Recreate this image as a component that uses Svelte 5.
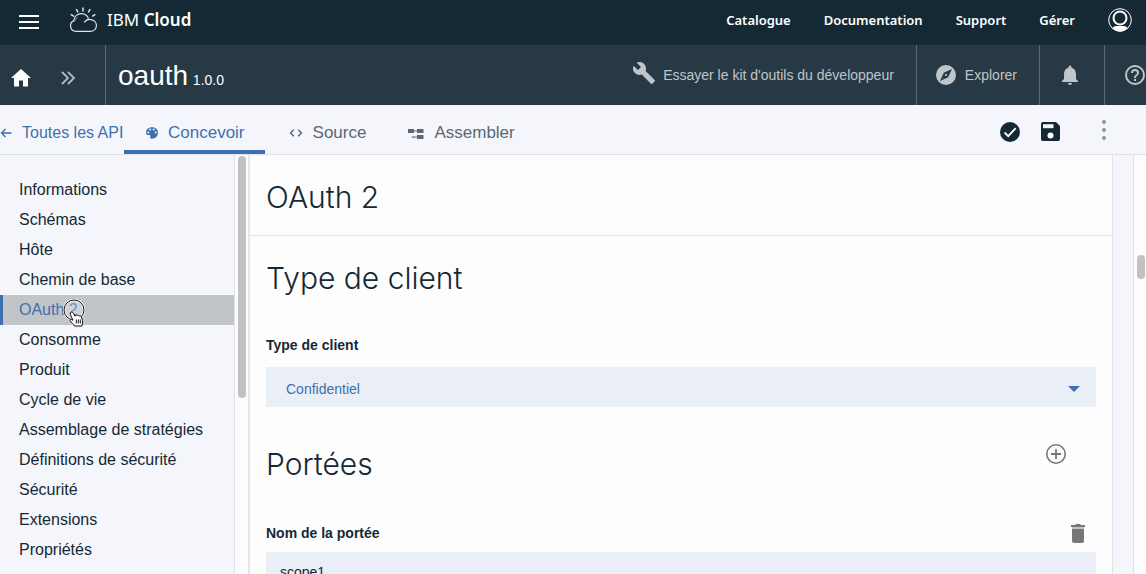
<script>
  const links = ['Catalogue', 'Documentation', 'Support', 'Gérer'];
  const sections = [
    'Informations',
    'Schémas',
    'Hôte',
    'Chemin de base',
    'OAuth 2',
    'Consomme',
    'Produit',
    'Cycle de vie',
    'Assemblage de stratégies',
    'Définitions de sécurité',
    'Sécurité',
    'Extensions',
    'Propriétés'
  ];
  let active = $state('OAuth 2');
  let clientType = $state('Confidentiel');
  let scopeName = $state('scope1');
</script>

<div class="app">
  <header class="top">
    <button class="icon menu" aria-label="Menu">
      <svg width="20" height="16" viewBox="0 0 20 16" stroke="#fff" stroke-width="2"><path d="M0 2h20M0 8h20M0 14h20" /></svg>
    </button>
    <a class="brand" href="#home">
      <svg width="28" height="26" viewBox="0 0 28 26" fill="none" stroke="#dfe4e7" stroke-width="1.2">
        <path d="M7 24.3h14.5a5.8 5.8 0 0 0 1.6-11.4 6.4 6.4 0 0 0-7.8 2.600" />
        <path d="M7 24.3a5.600 5.600 0 0 1-2.200-10.700C5 9 8.700 6.500 12.700 6.700c3 .1 5.500 1.600 6.800 4.900" />
        <path d="M5.500 14.500c.2-1.800 1.400-3.300 3-4" opacity=".5" />
        <path d="M14 0.500v4M7.300 2.200l1.800 3.200M21.200 2.200l-1.900 3.200M1.800 7.300l3.200 2M26.400 7.300l-3.200 2" stroke-width="1.500" />
      </svg>
      <span>IBM <b>Cloud</b></span>
    </a>
    <nav class="links">
      {#each links as link}
        <a href="#{link}">{link}</a>
      {/each}
    </nav>
    <button class="icon user" aria-label="Profil">
      <svg width="24" height="24" viewBox="0 0 24 24">
        <circle cx="12" cy="12" r="11.300" fill="none" stroke="#fff" />
        <path d="M4.500 20q1.200-2 4-2h7q2.800 0 4 2Q16.500 23.500 12 23.500T4.500 20Z" fill="#fff" />
        <circle cx="12" cy="10" r="6.500" fill="#152934" stroke="#fff" stroke-width="2" />
      </svg>
    </button>
  </header>

  <div class="product">
    <div class="crumbs">
      <a class="icon" href="#home" aria-label="Accueil">
        <svg width="20" height="18" viewBox="0 0 20 18" fill="#fff"><path d="M10 0 0 9h3v8.500h5V11.500h4v6h5V9h3Z" /></svg>
      </a>
      <button class="icon" aria-label="Déplier">
        <svg width="14" height="14" viewBox="0 0 14 14" fill="none" stroke="#b5bcc1" stroke-width="1.800"><path d="m1 1 6 6-6 6M7 1l6 6-6 6" /></svg>
      </button>
    </div>
    <div class="title">oauth <small>1.0.0</small></div>
    <a class="toolkit" href="#toolkit">
      <svg width="24" height="24" viewBox="0 0 24 24" fill="#c0c5c9"><path d="m22.700 19-9.100-9.100c.9-2.300.4-5-1.500-6.900-2-2-5-2.400-7.400-1.300L9 6 6 9 1.600 4.700C.4 7.100.9 10.100 2.900 12.100c1.900 1.900 4.600 2.400 6.900 1.500l9.100 9.100c.4.4 1 .4 1.400 0l2.300-2.300c.5-.4.5-1.100.1-1.400Z" /></svg>
      <span>Essayer le kit d'outils du développeur</span>
    </a>
    <a class="cell explore" href="#explore">
      <svg width="24" height="24" viewBox="0 0 24 24" fill="#c0c5c9"><path d="M12 10.900a1.100 1.100 0 1 0 0 2.200 1.100 1.100 0 0 0 0-2.200ZM12 2a10 10 0 1 0 0 20 10 10 0 0 0 0-20Zm2.190 12.190L6 18l3.810-8.190L18 6Z" /></svg>
      <span>Explorer</span>
    </a>
    <button class="icon cell bell" aria-label="Notifications">
      <svg width="16" height="20" viewBox="0 0 16 20" fill="#c0c5c9"><path d="M8 20a2 2 0 0 0 2-2H6a2 2 0 0 0 2 2Zm6-6V9c0-3.100-1.600-5.600-4.500-6.300V2a1.500 1.500 0 0 0-3 0v.7C3.600 3.400 2 5.900 2 9v5l-2 2v1h16v-1Z" /></svg>
    </button>
    <button class="icon cell help" aria-label="Aide">
      <svg width="24" height="24" viewBox="0 0 24 24" fill="#c0c5c9"><path d="M11 18h2v-2h-2v2Zm1-16a10 10 0 1 0 0 20 10 10 0 0 0 0-20Zm0 18a8 8 0 1 1 0-16 8 8 0 0 1 0 16Zm0-14a4 4 0 0 0-4 4h2a2 2 0 1 1 4 0c0 2-3 1.750-3 5h2c0-2.250 3-2.500 3-5a4 4 0 0 0-4-4Z" /></svg>
    </button>
  </div>

  <div class="tabs">
    <a class="back" href="#apis">
      <svg width="12" height="10" viewBox="0 0 12 10" fill="none" stroke="#3d70b2" stroke-width="1.400"><path d="M11.500 5H1.500M5.500 1l-4 4 4 4" /></svg>
      Toutes les API
    </a>
    <a class="tab design current" href="#design">
      <svg width="12" height="12" viewBox="0 0 12 12" fill="#3d70b2"><path fill-rule="evenodd" d="M6 .3C2.500.3 0 2.600 0 5.500c0 1.800 1.200 2.800 2.500 2.600 1.400-.2 2 .4 1.700 1.600-.3 1.300.4 2 1.600 2C9.500 11.700 12 9 12 5.800 12 2.500 9.500.3 6 .3ZM2.200 6.500a1 1 0 1 1 0-2 1 1 0 0 1 0 2Zm2-3a1 1 0 1 1 0-2 1 1 0 0 1 0 2Zm3.600 0a1 1 0 1 1 0-2 1 1 0 0 1 0 2Zm2 3a1 1 0 1 1 0-2 1 1 0 0 1 0 2Z" /></svg>
      Concevoir
    </a>
    <a class="tab source" href="#source">
      <svg width="14" height="8" viewBox="0 0 14 8" fill="none" stroke="#5a6872" stroke-width="1.400"><path d="M4.800.7 1.500 4l3.300 3.300M9.200.7 12.500 4 9.200 7.300" /></svg>
      Source
    </a>
    <a class="tab assemble" href="#assemble">
      <svg width="16" height="11" viewBox="0 0 16 11" fill="#5a6872"><path d="M0 1h6v4H0ZM9 1h6.500v4H9ZM9 7h6.500v4H9ZM6 2.500h3v1H6ZM4 8.500h5v1H5.500v1L3.500 9l2-1.500Z" /></svg>
      Assembler
    </a>
    <div class="actions">
      <button class="icon" aria-label="Valider">
        <svg width="20" height="20" viewBox="0 0 20 20"><circle cx="10" cy="10" r="10" fill="#152934" /><path d="m4.500 10.500 3.700 3.700 7.500-8" fill="none" stroke="#fff" stroke-width="1.800" /></svg>
      </button>
      <button class="icon" aria-label="Enregistrer">
        <svg width="19" height="19" viewBox="0 0 19 19"><path d="M2 0h13l4 4v13a2 2 0 0 1-2 2H2a2 2 0 0 1-2-2V2a2 2 0 0 1 2-2Z" fill="#152934" /><path d="M2 2.200h10.500v4H2Z" fill="#f4f6fb" /><circle cx="9.500" cy="13.500" r="3" fill="#fff" /></svg>
      </button>
      <button class="icon more" aria-label="Plus d'options">
        <svg width="4" height="20" viewBox="0 0 4 20" fill="#8c989f"><circle cx="2" cy="2" r="2" /><circle cx="2" cy="10" r="2" /><circle cx="2" cy="18" r="2" /></svg>
      </button>
    </div>
  </div>

  <div class="body">
    <nav class="side">
      {#each sections as section}
        <a href="#{section}" class:selected={section === active} onclick={() => (active = section)}>
          {section}
          {#if section === 'OAuth 2'}
            <svg class="pointer" width="24" height="30" viewBox="0 0 24 30">
              <circle cx="11" cy="11" r="10" fill="#fff" fill-opacity=".25" stroke="#fff" stroke-width="2.200" />
              <circle cx="11" cy="11" r="10" fill="none" stroke="#111" />
              <path d="M7.500 13.500c1-.9 2.200-.3 2.800.7l1.700 3 .3-.8c.8-.6 1.700-.3 2 .3.700-.6 1.700-.4 2 .4.900-.5 2 0 2.200 1l1 3.500c.3 2-.3 2.800-.5 5.400h-7.500c-.8-2-2.700-2.800-4.200-5.200-.8-1.100.6-2.100 1.700-1.200l1 .7-2.700-6Z" fill="#fff" stroke="#111" />
              <path d="M13.300 20.500v4M15.300 20.500v4M17.300 20.500v4" stroke="#111" fill="none" />
            </svg>
          {/if}
        </a>
      {/each}
    </nav>
    <div class="track side-track"><div class="thumb"></div></div>

    <main>
      <h1>OAuth 2</h1>
      <section>
        <h2>Type de client</h2>
        <label for="client-type">Type de client</label>
        <div class="select">
          <select id="client-type" bind:value={clientType}>
            <option>Confidentiel</option>
            <option>Public</option>
          </select>
          <svg width="12" height="6" viewBox="0 0 12 6" fill="#3d70b2"><path d="M0 0h12L6 6Z" /></svg>
        </div>
      </section>
      <section class="scopes">
        <div class="heading">
          <h2>Portées</h2>
          <button class="icon" aria-label="Ajouter une portée">
            <svg width="20" height="20" viewBox="0 0 20 20" fill="none" stroke="#777"><circle cx="10" cy="10" r="9.200" stroke-width="1.600" /><path d="M10 5v10M5 10h10" stroke-width="1.800" /></svg>
          </button>
        </div>
        <div class="heading field">
          <label for="scope">Nom de la portée</label>
          <button class="icon" aria-label="Supprimer la portée">
            <svg width="14" height="19" viewBox="0 0 14 19" fill="#777"><path d="M4 1 5 0h4l1 1h4v2H0V1Z" /><path d="M1 3h12v2H1Z" fill="#c4c4c4" /><path d="M1 5h12v12a2 2 0 0 1-2 2H3a2 2 0 0 1-2-2Z" /></svg>
          </button>
        </div>
        <input id="scope" type="text" bind:value={scopeName} />
      </section>
    </main>
    <div class="gutter"></div>
    <div class="track page-track"><div class="thumb"></div></div>
  </div>
</div>

<style>
  :global(body) {
    margin: 0;
    overflow: hidden;
  }
  .app {
    display: flex;
    flex-direction: column;
    height: 100vh;
    overflow: hidden;
    color: #152934;
    background: #fdfdfd;
    font-family: 'Liberation Sans', Arial, sans-serif;
    font-size: 16px;
  }
  .app * {
    box-sizing: border-box;
  }
  a {
    color: inherit;
    text-decoration: none;
  }
  svg {
    display: block;
    flex: none;
  }
  .icon {
    display: flex;
    align-items: center;
    padding: 0;
    border: 0;
    background: none;
  }
  .top {
    display: flex;
    align-items: center;
    flex: none;
    height: 45px;
    padding: 0 14px 6px 19px;
    background: #152934;
    color: #fff;
    font-family: 'Noto Sans', sans-serif;
  }
  .menu {
    padding-top: 4px;
  }
  .brand {
    display: flex;
    align-items: center;
    gap: 10px;
    margin-left: 30px;
    font-size: 17px;
  }
  .brand b {
    font-weight: 600;
  }
  .links {
    display: flex;
    gap: 33px;
    margin-left: auto;
    font-size: 13px;
    font-weight: 600;
  }
  .user {
    margin-left: 33px;
  }
  .product {
    display: flex;
    flex: none;
    height: 60px;
    background: #263944;
    color: #c0c5c9;
    font-size: 14px;
  }
  .crumbs {
    display: flex;
    align-items: center;
    gap: 30px;
    width: 106px;
    padding: 6px 0 0 11px;
    border-right: 1px solid #5a6872;
  }
  .title {
    padding: 16px 0 0 12px;
    color: #fff;
    font-size: 28px;
    line-height: 30px;
  }
  .title small {
    margin-left: -3px;
    font-size: 14px;
  }
  .toolkit {
    display: flex;
    align-items: center;
    gap: 7px;
    margin-left: auto;
    padding-right: 22px;
  }
  .toolkit svg {
    margin-bottom: 4px;
  }
  .cell {
    display: flex;
    align-items: center;
    border-left: 1px solid #5a6872;
  }
  .explore {
    gap: 7px;
    padding: 0 22px 0 17px;
  }
  .bell {
    padding: 0 26px 0 22px;
  }
  .help {
    width: 42px;
    padding-left: 18px;
    overflow: hidden;
  }
  .tabs {
    display: flex;
    flex: none;
    height: 50px;
    border-bottom: 1px solid #dfe3e6;
    background: #f4f6fb;
    color: #5a6872;
    font-size: 17px;
  }
  .tabs > a {
    display: flex;
    align-items: center;
    gap: 10px;
    padding-top: 11px;
    border-bottom: 4px solid transparent;
  }
  .tabs .back {
    width: 124px;
    color: #3d70b2;
    font-size: 16px;
  }
  .tabs .tab {
    padding-left: 22px;
    padding-right: 20px;
  }
  .tabs .current {
    border-color: #3d70b2;
    color: #3d70b2;
  }
  .tabs .source {
    margin-left: 2px;
  }
  .actions {
    display: flex;
    align-items: center;
    gap: 21px;
    margin-left: auto;
    padding: 4px 40px 0 0;
  }
  .more {
    margin: 0 0 4px 21px;
  }
  .body {
    display: flex;
    flex: 1;
    min-height: 0;
  }
  .side {
    flex: none;
    width: 235px;
    padding-top: 20px;
    overflow: hidden;
    border-right: 1px solid #dfe3e6;
    background: #f4f6fb;
  }
  .side a {
    position: relative;
    display: block;
    padding-left: 16px;
    border-left: 3px solid transparent;
    font-size: 16px;
    line-height: 30px;
  }
  .side .selected {
    border-color: #3d70b2;
    background: #c2c5c7;
    color: #3d70b2;
  }
  .pointer {
    position: absolute;
    top: 4px;
    left: 60px;
  }
  .track {
    flex: none;
    background: #fdfdfd;
  }
  .thumb {
    width: 8px;
    border-radius: 4px;
    background: #c1c1c1;
  }
  .side-track {
    width: 15px;
    padding: 1px 0 0 3px;
    border-right: 2px solid #e3e8ee;
  }
  .side-track .thumb {
    height: 58%;
  }
  .page-track {
    width: 12px;
    padding: 100px 0 0 3px;
  }
  .page-track .thumb {
    height: 24px;
  }
  .gutter {
    flex: none;
    width: 22px;
    border: solid #dfe3e6;
    border-width: 0 1px;
    background: #f4f6fb;
  }
  main {
    flex: 1;
    min-width: 0;
    overflow: hidden;
  }
  h1,
  h2 {
    margin: 0;
    font-family: Inter, sans-serif;
    font-size: 30px;
    font-weight: 300;
    line-height: 40px;
  }
  h1 {
    padding: 22px 16px 18px;
    border-bottom: 1px solid #dfe3e6;
  }
  section {
    padding: 22px 16px 0;
  }
  label {
    display: block;
    font-size: 14px;
    font-weight: 700;
    line-height: 20px;
  }
  h2 + label {
    margin-top: 37px;
  }
  .select {
    display: flex;
    align-items: center;
    margin-top: 12px;
    padding-right: 16px;
    background: #eaeff7;
  }
  select {
    flex: 1;
    height: 40px;
    padding: 4px 20px 0;
    border: 0;
    appearance: none;
    background: none;
    color: #3d70b2;
    font-family: inherit;
    font-size: 14px;
  }
  .select svg {
    margin-top: 4px;
  }
  .scopes {
    padding-top: 37px;
  }
  .heading {
    display: flex;
    align-items: center;
    justify-content: space-between;
    padding-right: 30px;
  }
  .heading > .icon {
    margin-bottom: 20px;
  }
  .heading.field {
    margin-top: 39px;
    padding-right: 11px;
  }
  .field > .icon {
    margin: 0;
  }
  input {
    display: block;
    width: 100%;
    height: 40px;
    margin-top: 9px;
    padding: 0 14px;
    border: 0;
    background: #eaeff7;
    color: #152934;
    font-family: inherit;
    font-size: 14px;
  }
</style>
